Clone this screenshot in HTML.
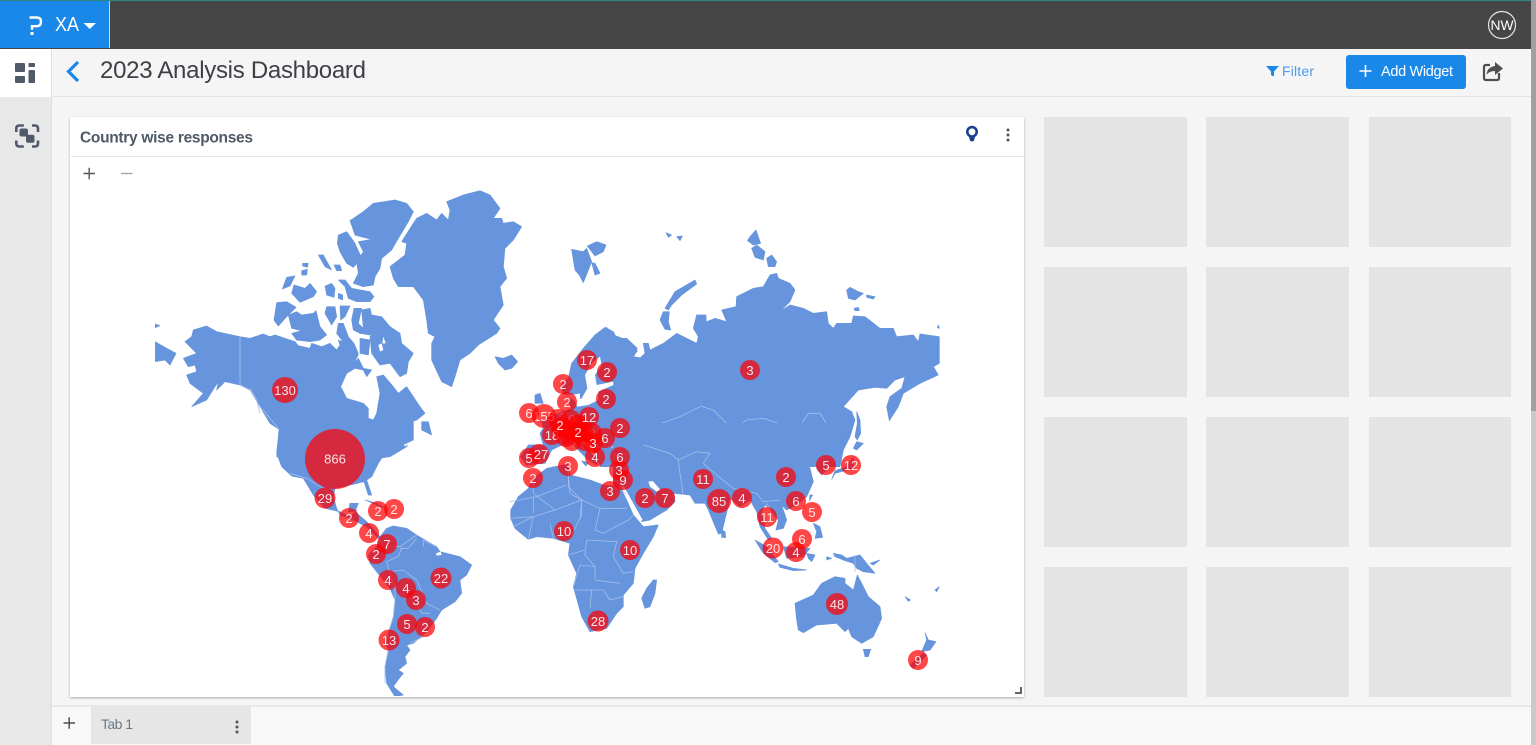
<!DOCTYPE html>
<html><head><meta charset="utf-8"><title>2023 Analysis Dashboard</title>
<style>
html,body{margin:0;padding:0;background:#f5f5f5;overflow:hidden}
svg{display:block;font-family:"Liberation Sans",sans-serif}
.l{fill:#6694dd;stroke:#6694dd;stroke-width:2;stroke-linejoin:round}
.w{fill:#fff}
.b{fill:none;stroke:#a5bfea;stroke-width:2.4}
.c{fill:#ff0000;fill-opacity:.72}
.t{fill:#fff;fill-opacity:.88;font-size:13px;text-anchor:middle}
.g{fill:#e4e4e4}
</style></head><body>
<svg width="1536" height="745" viewBox="0 0 1536 745" xmlns="http://www.w3.org/2000/svg">
<defs><filter id="s" x="-2%" y="-2%" width="104%" height="104%"><feDropShadow dx="0" dy="1" stdDeviation="1.3" flood-color="#000" flood-opacity=".3"/></filter><clipPath id="mc"><rect x="155" y="157" width="785" height="539"/></clipPath></defs>
<rect width="1536" height="745" fill="#f5f5f5"/>
<!-- top bar -->
<rect width="1531" height="49" fill="#464646"/>
<rect width="1531" height="1" fill="#2f8582"/>
<rect y="1" width="109" height="47" fill="#1a88e8"/>
<rect x="109" y="1" width="1" height="47" fill="#cfd8e0"/>
<path d="M29.500 17.500H37q4 .2 4 4.300t-4 4.400h-5v3.500" fill="none" stroke="#fff" stroke-width="2.400"/>
<rect x="30.500" y="32" width="3" height="3" fill="#fff"/>
<text x="55" y="31" font-size="20" fill="#fff" textLength="24" lengthAdjust="spacingAndGlyphs">XA</text>
<path d="M83.500 23h12.500l-6.200 6z" fill="#fff"/>
<circle cx="1502" cy="25" r="13.500" fill="none" stroke="#e4e4e4" stroke-width="1.200"/>
<text x="1502" y="30" font-size="14" fill="#fff" text-anchor="middle" textLength="23" lengthAdjust="spacingAndGlyphs">NW</text>
<!-- scrollbar -->
<rect x="1531" width="5" height="745" fill="#c9c9c9"/>
<rect x="1531" width="5" height="411" fill="#a0a0a0"/>
<!-- sidebar -->
<rect y="49" width="51" height="696" fill="#e8e8e8"/>
<rect x="51" y="49" width="1" height="696" fill="#e0e0e0"/>
<rect y="49" width="51" height="48" fill="#fff"/>
<g fill="#505a68"><rect x="15" y="63" width="10" height="9" rx="1"/><rect x="28.500" y="63" width="6.500" height="4" rx=".8"/><rect x="15" y="76" width="10" height="7" rx="1"/><rect x="28.500" y="70" width="6.500" height="13" rx="1"/></g>
<path d="M16.300 132v-3.500q0-3 3-3h4.500M32 125.500h3q3 0 3 3v3.500M38 140.500v3q0 3-3 3h-3M23.800 146.500h-4.500q-3 0-3-3v-3" fill="none" stroke="#505a68" stroke-width="2.600"/>
<rect x="19.500" y="128.500" width="8.500" height="8" rx="2" fill="#505a68"/><rect x="26" y="134.800" width="8.500" height="8" rx="2" fill="#505a68"/>
<!-- header -->
<rect x="52" y="96" width="1479" height="1" fill="#e5e5e5"/>
<path d="M78 62l-9.500 9.500 9.500 9.500" fill="none" stroke="#1a88e8" stroke-width="3.200"/>
<text x="100" y="78" font-size="24" fill="#3d4046" textLength="266" lengthAdjust="spacing">2023 Analysis Dashboard</text>
<path d="M1266 66h13l-5 5.500v5l-3-1.500v-3.500z" fill="#1a88e8"/>
<text x="1282" y="76" font-size="14" fill="#4a9bea" textLength="32">Filter</text>
<rect x="1346" y="55" width="120" height="34" rx="3" fill="#1a88e8"/>
<path d="M1359.500 71h12M1365.500 65v12" stroke="#fff" stroke-width="1.600"/>
<text x="1381" y="76" font-size="14.500" fill="#fff" textLength="72">Add Widget</text>
<path d="M1499 73v5q0 2-2 2h-11q-2 0-2-2v-11q0-2 2-2h4" fill="none" stroke="#505050" stroke-width="2.200"/>
<path d="M1495 62l8 6.500-8 6.500v-4q-6 0-8.500 4 .5-8 8.500-9z" fill="#505050"/>
<!-- placeholders -->
<g class="g">
<rect x="1044" y="117" width="143" height="130"/><rect x="1206" y="117" width="143" height="130"/><rect x="1369" y="117" width="142" height="130"/>
<rect x="1044" y="267" width="143" height="130"/><rect x="1206" y="267" width="143" height="130"/><rect x="1369" y="267" width="142" height="130"/>
<rect x="1044" y="417" width="143" height="130"/><rect x="1206" y="417" width="143" height="130"/><rect x="1369" y="417" width="142" height="130"/>
<rect x="1044" y="567" width="143" height="130"/><rect x="1206" y="567" width="143" height="130"/><rect x="1369" y="567" width="142" height="130"/>
</g>
<!-- card -->
<rect x="70" y="117" width="954" height="580" fill="#fff" filter="url(#s)"/>
<rect x="71" y="156" width="953" height="1" fill="#e6e6e6"/>
<text x="80" y="142.500" font-size="15.500" font-weight="bold" fill="#4f5a66" textLength="173">Country wise responses</text>
<circle cx="972" cy="131.800" r="4.700" fill="none" stroke="#1b3f8f" stroke-width="2.600"/>
<path d="M968.800 136h6.400l-1.200 4.800q-2 1.400-4 0z" fill="#1b3f8f"/>
<circle cx="1008" cy="130" r="1.500" fill="#555"/><circle cx="1008" cy="135" r="1.500" fill="#555"/><circle cx="1008" cy="140" r="1.500" fill="#555"/>
<path d="M83.500 173.500h11.500M89.200 167.800v11.500" stroke="#555" stroke-width="1.400"/>
<path d="M121 173.500h11.500" stroke="#a5a5a5" stroke-width="1.400"/>
<path d="M1015 693h6v-6" fill="none" stroke="#666" stroke-width="2"/>
<!-- MAP -->
<g clip-path="url(#mc)">
<g transform="translate(150,180) scale(.33333)">
<polygon class="l" points="890,65 940,45 990,32 1020,45 1050,85 1030,115 1055,115 1060,130 1090,125 1115,140 1090,180 1065,205 1060,260 1070,295 1050,320 1060,375 1030,420 1050,445 1040,460 985,495 960,520 930,540 915,590 905,620 875,605 845,540 845,490 855,470 835,460 830,420 820,360 790,320 745,320 730,295 720,260 765,225 770,190 755,185 790,130 800,115 830,100 860,120 875,100 895,120 900,90"/>
<polygon class="l" points="600,122 640,95 670,70 735,60 770,70 790,95 775,125 745,175 725,210 695,235 690,265 675,290 670,315 640,320 610,310 625,280 620,245 640,215 625,185 665,178 640,172 615,165 610,150"/>
<polygon class="l" points="565,165 590,155 615,190 635,235 610,262 590,250 570,215 562,190"/>
<polygon class="l" points="565,300 585,300 605,325 660,335 672,350 660,365 620,365 595,355 585,320"/>
<polygon class="l" points="505,225 520,225 545,270 525,260"/><polygon class="l" points="552,255 570,255 575,272 560,272"/><polygon class="l" points="458,250 475,250 472,262 458,258"/><polygon class="l" points="455,272 472,268 470,285 455,285"/>
<polygon class="l" points="410,292 435,288 420,318 397,327"/><polygon class="l" points="432,315 465,325 480,310 500,335 490,350 450,367 425,340"/><polygon class="l" points="525,318 545,310 555,325 552,352 530,345"/><polygon class="l" points="565,340 578,345 578,360 565,355"/>
<polygon class="l" points="380,368 410,365 438,382 410,410 385,438 372,420"/>
<polygon class="l" points="415,405 440,395 455,405 490,400 498,392 510,440 530,465 510,480 480,485 440,480 425,460 455,452 425,445"/>
<polygon class="l" points="530,380 555,380 560,410 545,435 525,400"/><polygon class="l" points="570,378 600,378 585,410 572,420"/><polygon class="l" points="565,430 580,430 595,470 612,490 625,520 600,515 575,480 560,460"/>
<polygon class="l" points="612,385 635,385 625,430 640,445 635,390 660,385 665,405 695,410 720,440 750,460 755,490 790,520 775,545 770,580 750,590 720,550 690,555 665,520 660,470 675,450 660,465 630,460 610,450 605,420"/>
<polygon class="l" points="630,475 660,480 655,525 630,520"/>
<polygon class="w" points="685,495 695,490 700,510 690,515"/><polygon class="w" points="700,470 707,490 697,490"/>
<polygon class="l" points="1035,530 1060,535 1085,525 1103,545 1085,565 1065,570 1045,550"/>
<polygon class="l" points="15,485 50,505 78,520 60,555 45,540 15,545"/><polygon class="l" points="15,432 30,437 15,443"/>
<polygon class="l" points="105,485 125,470 130,450 170,438 200,455 270,470 300,475 340,462 360,470 375,465 435,485 445,497 480,505 485,490 515,500 540,490 560,510 570,495 565,480 590,490 610,500 625,525 610,550 625,535 640,565 665,570 650,590 640,570 615,565 590,580 572,620 590,655 640,670 655,685 655,715 670,720 680,700 690,640 680,590 700,585 730,620 745,640 770,620 810,680 825,700 800,720 760,735 720,770 700,800 780,775 770,800 720,830 500,860 380,830 390,750 360,730 330,680 300,630 270,615 225,605 200,630 205,605 195,620 170,660 125,680 160,640 120,610 110,585 140,575 135,555 115,560 100,535 140,520 120,500"/>
<polygon class="l" points="815,725 835,725 845,765 815,750"/>
<polygon class="w" points="760,790 785,770 790,780 765,800"/>
<polyline class="b" points="270,470 270,615 300,630 330,680 385,745 600,745 640,770 655,810"/>
<polyline class="b" points="300,625 320,660 330,700"/>
<polyline class="b" points="655,810 720,770 750,750 770,770"/>
</g>
<!-- Americas lower -->
<g transform="translate(270,440) scale(.33333)">
<polygon class="l" points="30,-60 20,40 35,80 65,108 100,115 130,165 165,205 210,215 240,230 262,210 255,215 290,245 330,290 350,265 370,258 410,265 440,285 465,300 500,320 510,335 570,350 605,375 590,405 570,420 575,460 555,485 515,510 500,535 470,575 430,610 410,615 420,630 405,650 410,670 385,690 400,700 380,725 370,740 400,765 375,770 350,730 345,680 355,630 345,610 370,530 375,480 360,445 300,370 295,345 320,320 330,300 290,260 250,240 210,225 200,205 190,170 195,145 240,135 282,125 295,165 305,165 290,120 305,110 325,70 345,40 430,0 430,-60"/>
<polygon class="l" points="240,190 265,190 255,215 235,215"/>
<polygon class="w" points="80,115 88,118 115,165 108,170"/>
<polygon class="l" points="285,180 320,190 345,205 320,195"/>
<polygon class="w" points="498,340 512,335 515,345 500,347"/>
<polyline class="b" points="60,100 110,115 160,145"/>
<polyline class="b" points="350,320 390,320 440,285"/><polyline class="b" points="390,325 415,325 440,295"/><polyline class="b" points="460,320 460,300 500,320"/>
<polyline class="b" points="350,365 360,400 375,450 375,480 370,530 345,610 355,630 345,680 345,730"/>
<polyline class="b" points="360,395 400,390 440,420 470,490 510,510"/><polyline class="b" points="440,490 455,520 480,520"/><polyline class="b" points="430,560 460,590 420,610"/><polyline class="b" points="395,325 385,350 350,365"/>
<!-- Africa -->
<polygon class="l" points="722,210 745,170 775,145 790,115 830,85 895,72 900,105 960,120 1000,135 1050,140 1070,180 1090,225 1120,260 1165,255 1150,290 1120,340 1095,385 1090,430 1060,465 1060,500 1040,520 1010,565 960,575 935,530 910,440 920,400 895,345 900,310 850,295 800,290 775,298 735,265 722,235"/>
<polygon class="l" points="1150,420 1160,420 1155,460 1140,500 1125,505 1115,475 1130,445"/>
<polyline class="b" points="895,110 900,160 935,180 990,205 1070,205"/><polyline class="b" points="790,160 855,210 935,180 935,225 905,285"/><polyline class="b" points="990,205 975,270 1000,280 1075,240 1090,225"/><polyline class="b" points="720,235 790,230 855,210"/>
<polyline class="b" points="950,300 1040,305 1030,350 1060,400 1090,395"/><polyline class="b" points="945,330 895,345"/><polyline class="b" points="950,300 945,345 975,380 930,375 910,440"/><polyline class="b" points="975,380 975,420 1050,430"/><polyline class="b" points="915,450 1000,450 1020,480 1060,470"/><polyline class="b" points="965,450 960,505"/><polyline class="b" points="730,260 790,230 775,298"/><polyline class="b" points="840,250 850,295"/><polyline class="b" points="790,160 790,115"/>
</g>
<!-- Russia -->
<g transform="translate(550,180) scale(.33333)">
<polygon class="l" points="170,442 190,465 225,478 262,512 250,530 255,548 285,520 280,490 295,490 300,510 340,490 380,460 440,490 445,470 430,445 440,405 468,405 470,450 475,480 495,485 475,490 465,520 450,525 470,490 470,425 495,415 530,425 515,390 558,380 560,350 610,325 640,320 660,285 680,280 685,295 720,310 735,330 720,365 690,395 720,375 760,385 790,400 830,395 835,430 850,445 860,430 905,430 910,408 945,410 990,445 1030,445 1040,470 1090,465 1105,485 1110,462 1168,470 1168,550 1150,560 1165,585 1110,610 1060,640 1045,680 1018,722 1010,680 1020,650 1055,625 1065,590 1035,600 1010,625 975,622 925,630 880,680 905,695 915,720 900,770 880,810 870,860 300,860 150,860 150,600"/>
<polygon class="w" points="205,520 250,530 255,548 240,565 225,560 215,540"/>
<polygon class="l" points="345,385 375,335 435,300 440,312 395,345 365,375 355,390"/><polygon class="l" points="340,395 358,395 355,425 362,450 345,448 330,420"/>
<polygon class="l" points="65,208 100,215 110,205 125,245 100,308 88,285 75,270"/><polygon class="l" points="112,198 140,185 168,195 160,215 135,228"/><polygon class="l" points="125,248 135,250 150,280 135,285"/>
<polygon class="l" points="348,158 365,165 355,172"/><polygon class="l" points="380,170 397,168 390,182"/>
<polygon class="l" points="600,170 618,150 632,190 610,195 592,182"/><polygon class="l" points="605,205 620,195 645,215 640,240 615,232"/><polygon class="l" points="650,235 665,225 680,245 675,260 655,260"/>
<polygon class="l" points="890,330 900,322 925,335 940,340 915,360 895,355"/><polygon class="l" points="950,345 975,350 970,357 950,352"/><polygon class="l" points="912,385 925,382 928,392 915,392"/><polygon class="l" points="1165,435 1168,445 1162,443"/>
<polygon class="l" points="920,695 930,720 932,760 922,780 915,770 922,730"/>
<polyline class="b" points="300,750 310,720 350,715 395,690 450,678 490,690 530,730 560,742 590,720 640,715 700,735 750,740 775,700 810,700 835,740 870,760 850,790"/>
<polyline class="b" points="560,742 530,770 530,810"/><polyline class="b" points="560,742 610,790 700,770 775,765"/>
<polyline class="b" points="130,480 130,510 80,560 70,600"/><polyline class="b" points="150,480 145,520 175,560 190,590"/><polyline class="b" points="175,460 185,510 200,600 205,690 250,730"/>
</g>
<!-- Europe / Middle East -->
<g transform="translate(500,300) scale(.33333)">
<polygon class="l" points="190,280 185,250 205,235 215,190 250,145 285,105 315,82 340,95 350,115 380,115 412,145 395,165 365,165 600,200 600,540 440,590 380,570 340,555 345,510 352,495 330,495 325,470 335,460 320,450 318,490 300,495 290,470 270,430 295,480 290,495 265,480 235,450 215,430 185,435 155,450 135,490 80,495 62,470 85,435 130,435 120,400 130,385 125,365 150,350 175,340 215,325 205,300"/>
<polygon class="w" points="300,170 275,190 255,225 262,265 245,295 225,305 232,320 265,315 295,300 295,275 340,255 340,245 290,255 285,225 305,195"/>
<polygon class="w" points="180,285 225,283 240,280 240,300 225,305 215,295 180,300"/>
<polygon class="w" points="335,440 360,432 385,415 415,430 420,450 395,452 345,450"/>
<polygon class="w" points="450,415 480,410 470,430 490,475 495,495 470,490 465,460 445,440"/>
<polygon class="w" points="235,415 270,430 290,470 282,470 262,445"/>
<polygon class="l" points="105,285 120,280 130,310 105,310"/>
<polygon class="l" points="245,483 265,487 258,498"/>
<polyline class="b" points="450,370 470,375 540,350 600,320"/><polyline class="b" points="510,425 560,410 600,430"/><polyline class="b" points="420,460 470,480"/><polyline class="b" points="350,495 420,490 465,500 480,560"/><polyline class="b" points="345,510 430,520 510,590"/><polyline class="b" points="520,440 510,500 540,520 600,525"/><polyline class="b" points="205,510 205,560 245,600 240,660"/><polyline class="b" points="30,605 110,590 200,555"/><polyline class="b" points="100,590 100,640"/>
</g>
<!-- Asia south / Oceania -->
<g transform="translate(650,440) scale(.33333)">
<polygon class="l" points="590,-10 560,20 520,50 530,90 515,105 500,85 500,55 485,40 462,60 480,85 490,125 470,170 440,195 410,210 395,195 410,240 400,265 378,270 385,240 360,205 345,195 335,215 345,265 365,295 355,300 330,260 320,215 300,180 270,200 240,175 215,280 205,282 175,210 165,190 135,190 120,165 72,160 75,185 50,210 0,240 -25,245 -80,150 -110,135 -110,-50 590,-50"/>
<polygon class="w" points="-5,125 8,123 32,150 20,155 0,140"/>
<polygon class="w" points="-85,140 -78,140 -22,240 -30,245"/>
<polygon class="l" points="620,5 640,10 620,30 610,25"/>
<polygon class="l" points="610,50 612,85 555,100 545,118 555,92 590,80"/>
<polygon class="l" points="215,270 225,275 227,293 215,292"/>
<polygon class="l" points="315,300 350,320 385,365 375,368 340,340"/>
<polygon class="l" points="385,372 430,385 470,390 430,392 390,382"/>
<polygon class="l" points="400,320 480,325 460,350 410,355"/>
<polygon class="l" points="490,250 510,260 518,292 495,295 500,275"/>
<polygon class="l" points="470,340 495,345 485,365 475,355"/>
<polygon class="l" points="480,165 488,165 478,182"/>
<polygon class="l" points="550,340 575,345 590,355 630,345 650,370 675,400 640,395 620,385 610,370 580,360 555,350"/>
<polygon class="l" points="530,350 545,355 530,360"/><polygon class="l" points="660,370 690,360 670,375"/>
<polygon class="l" points="435,490 490,465 515,430 555,410 585,415 585,430 610,450 622,405 635,430 655,470 690,500 695,535 670,590 635,610 605,590 595,565 585,575 560,550 500,555 460,578 445,570 440,540"/>
<polygon class="l" points="640,628 662,628 655,650 645,650"/>
<polygon class="l" points="825,578 835,600 858,605 840,630 815,635 830,600"/><polygon class="l" points="820,640 830,645 790,685 780,675"/>
<polygon class="l" points="765,470 782,480 775,484"/><polygon class="l" points="855,450 868,440 860,455"/>
<polyline class="b" points="90,100 85,60 140,35 180,40 160,70 200,105 250,145 320,160 340,185 390,180"/><polyline class="b" points="100,165 90,100"/><polyline class="b" points="-20,15 60,40 85,60"/>
<polyline class="b" points="615,345 615,395"/><polyline class="b" points="350,190 380,240"/>
</g>
</g>
<!-- Bubbles: base layer -->
<g class="c">
<circle cx="335" cy="459" r="30"/><circle cx="285" cy="390" r="13"/><circle cx="325" cy="498" r="10.500"/><circle cx="349" cy="518" r="10"/><circle cx="378" cy="511" r="10"/><circle cx="394" cy="509" r="10"/><circle cx="369" cy="533" r="10"/><circle cx="387" cy="544" r="10"/><circle cx="376" cy="554" r="10"/><circle cx="388" cy="580" r="10"/><circle cx="406" cy="588" r="10"/><circle cx="416" cy="600" r="10"/><circle cx="441" cy="578" r="10.500"/><circle cx="407" cy="624" r="10"/><circle cx="425" cy="627" r="10"/><circle cx="389" cy="640" r="10.500"/>
<circle cx="564" cy="531" r="10"/><circle cx="630" cy="550" r="10"/><circle cx="598" cy="621" r="10.500"/><circle cx="750" cy="370" r="10"/><circle cx="837" cy="604" r="11"/><circle cx="918" cy="660" r="10"/>
<circle cx="587" cy="360" r="10"/><circle cx="607" cy="372" r="10"/><circle cx="563" cy="384" r="10"/><circle cx="567" cy="402" r="10"/><circle cx="606" cy="399" r="10"/><circle cx="544" cy="416" r="12"/>
<circle cx="620" cy="428" r="10"/><circle cx="595" cy="457" r="10"/><circle cx="620" cy="457" r="10"/><circle cx="619" cy="470" r="10"/><circle cx="623" cy="480" r="10"/><circle cx="610" cy="491" r="10"/><circle cx="645" cy="498" r="10"/><circle cx="665" cy="498" r="10"/><circle cx="568" cy="466" r="10"/><circle cx="539" cy="454" r="10"/><circle cx="529" cy="458" r="10"/><circle cx="533" cy="478" r="10"/>
<circle cx="703" cy="479" r="10"/><circle cx="719" cy="501" r="12"/><circle cx="742" cy="498" r="10"/><circle cx="786" cy="477" r="10"/><circle cx="826" cy="465" r="10"/><circle cx="851" cy="465" r="10"/><circle cx="796" cy="501" r="10"/><circle cx="812" cy="512" r="10"/><circle cx="767" cy="517" r="10"/><circle cx="773" cy="548" r="10.500"/><circle cx="802" cy="539" r="10"/><circle cx="796" cy="552" r="10"/>
<circle cx="552" cy="435" r="10"/><circle cx="589" cy="417" r="10"/><circle cx="605" cy="438" r="10"/>
</g>
<!-- Labels covered by the cluster -->
<g class="t">
<text x="544" y="421">155</text><text x="552" y="440">18</text><text x="562" y="422">2</text><text x="572" y="424">9</text><text x="565" y="441">7</text><text x="572" y="446">3</text><text x="592" y="438">3</text>
</g>
<!-- Cluster top layer -->
<g class="c">
<circle cx="529" cy="413" r="10"/>
<circle cx="558" cy="419" r="10"/><circle cx="571" cy="420" r="10"/><circle cx="561" cy="427" r="10"/><circle cx="578" cy="425" r="10"/><circle cx="566" cy="437" r="10"/><circle cx="578" cy="433" r="10"/><circle cx="572" cy="441" r="10"/><circle cx="583" cy="432" r="10"/><circle cx="592" cy="433" r="10"/><circle cx="593" cy="443" r="10"/><circle cx="569" cy="430" r="10"/><circle cx="585" cy="441" r="10"/>
</g>
<!-- Visible labels -->
<g class="t">
<text x="335" y="463.500">866</text><text x="285" y="395">130</text><text x="325" y="503">29</text><text x="349" y="523">2</text><text x="378" y="516">2</text><text x="394" y="514">2</text><text x="369" y="538">4</text><text x="387" y="549">7</text><text x="376" y="559">2</text><text x="388" y="585">4</text><text x="406" y="593">4</text><text x="416" y="605">3</text><text x="441" y="583">22</text><text x="407" y="629">5</text><text x="425" y="632">2</text><text x="389" y="645">13</text>
<text x="564" y="536">10</text><text x="630" y="555">10</text><text x="598" y="626">28</text><text x="750" y="375">3</text><text x="837" y="609">48</text><text x="918" y="665">9</text>
<text x="587" y="365">17</text><text x="607" y="377">2</text><text x="563" y="389">2</text><text x="567" y="407">2</text><text x="606" y="404">2</text><text x="529" y="418">6</text>
<text x="560" y="430">2</text><text x="589" y="422">12</text><text x="578" y="437">2</text><text x="593" y="448">3</text><text x="605" y="443">6</text><text x="620" y="433">2</text><text x="595" y="462">4</text><text x="620" y="462">6</text><text x="619" y="475">3</text><text x="623" y="485">9</text><text x="610" y="496">3</text><text x="645" y="503">2</text><text x="665" y="503">7</text><text x="568" y="471">3</text><text x="541" y="459">27</text><text x="529" y="463">5</text><text x="533" y="483">2</text>
<text x="703" y="484">11</text><text x="719" y="506">85</text><text x="742" y="503">4</text><text x="786" y="482">2</text><text x="826" y="470">5</text><text x="851" y="470">12</text><text x="796" y="506">6</text><text x="812" y="517">5</text><text x="767" y="522">11</text><text x="773" y="553">20</text><text x="802" y="544">6</text><text x="796" y="557">4</text>
</g>
<!-- tabs -->
<rect x="52" y="706" width="1479" height="39" fill="#f8f8f8"/>
<rect x="52" y="705" width="1479" height="2" fill="#e9e9e9"/>
<path d="M63.500 723h11.500M69.200 717.300v11.500" stroke="#505050" stroke-width="1.500"/>
<rect x="91" y="707" width="160" height="37" fill="#e6e6e6"/>
<text x="101" y="729" font-size="14" fill="#6c7a8a" textLength="32">Tab 1</text>
<circle cx="237" cy="722" r="1.500" fill="#555"/><circle cx="237" cy="727" r="1.500" fill="#555"/><circle cx="237" cy="732" r="1.500" fill="#555"/>
</svg>
</body></html>
